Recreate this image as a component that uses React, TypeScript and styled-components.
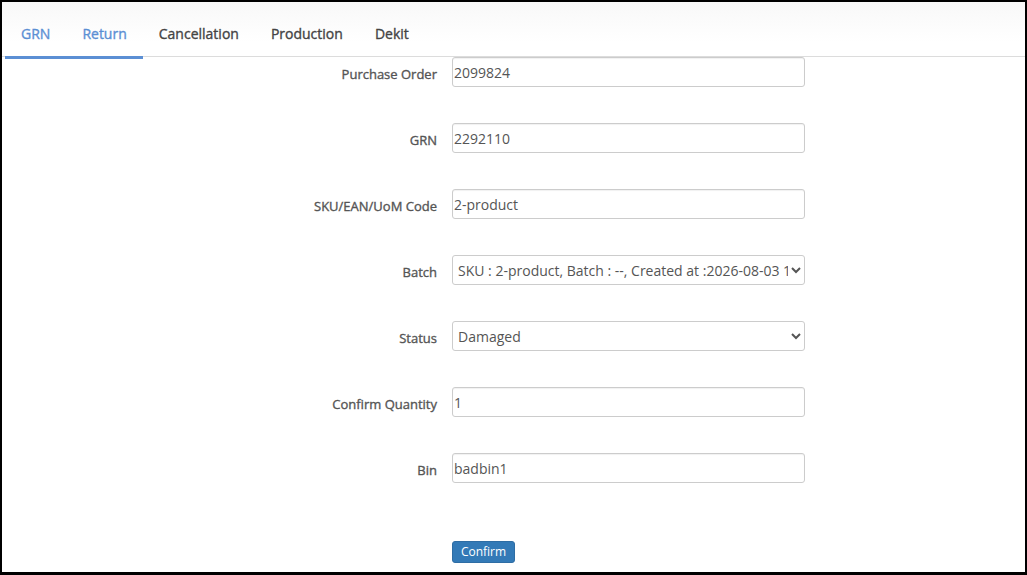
import React, { useState } from "react";
import styled, { createGlobalStyle } from "styled-components";

const GlobalStyle = createGlobalStyle`
  html, body {
    margin: 0;
    padding: 0;
    background: #fff;
    font-family: "Open Sans", "Liberation Sans", sans-serif;
  }
`;

const Frame = styled.div`
  box-sizing: border-box;
  width: 1027px;
  height: 575px;
  border-style: solid;
  border-color: #000;
  border-width: 2px 2px 3px 2px;
  background: #fff;
  overflow: hidden;
`;

const TabBar = styled.div`
  display: flex;
  height: 54px;
  padding-left: 3px;
  border-bottom: 1px solid #dcdcdc;
  background: linear-gradient(#f8f8f8, #fff 40px);
`;

/* semibold look: only regular/bold faces are available, so thicken regular */
const Tab = styled.div<{ $active?: boolean }>`
  display: flex;
  align-items: center;
  box-sizing: border-box;
  height: 57px;
  padding: 8px 16px 0;
  margin-bottom: -1px;
  font-size: 14px;
  font-weight: 400;
  -webkit-text-stroke: 0.35px currentColor;
  color: ${(p) => (p.$active ? "#5b8fd4" : "#444")};
  border-bottom: 3px solid ${(p) => (p.$active ? "#5b8fd4" : "transparent")};
  cursor: pointer;
`;

const Form = styled.div`
  display: flex;
  flex-direction: column;
`;

const Row = styled.div`
  display: flex;
  align-items: center;
  gap: 15px;
  margin-bottom: 36px;
`;

const Label = styled.label`
  width: 435px;
  text-align: right;
  font-size: 13px;
  font-weight: 400;
  -webkit-text-stroke: 0.35px currentColor;
  color: #555;
  padding-top: 3px;
`;

const TextInput = styled.input`
  box-sizing: border-box;
  width: 353px;
  height: 30px;
  padding: 0 1px;
  border: 1px solid #ccc;
  border-radius: 3px;
  box-shadow: inset 0 1px 1px rgba(0, 0, 0, 0.06);
  font-family: "Open Sans", "Liberation Sans", sans-serif;
  font-size: 14px;
  color: #555;
  outline: none;
`;

const Select = styled.select`
  box-sizing: border-box;
  width: 353px;
  height: 30px;
  padding: 0 0 0 1px;
  border: 1px solid #ccc;
  border-radius: 3px;
  background: #fff;
  font-family: "Open Sans", "Liberation Sans", sans-serif;
  font-size: 14px;
  color: #555;
  outline: none;
`;

const Actions = styled.div`
  padding: 20px 0 0 450px;
`;

const Button = styled.button`
  box-sizing: border-box;
  width: 63px;
  height: 22px;
  padding: 0;
  border: 1px solid #2e6da4;
  border-radius: 3px;
  background: #337ab7;
  color: #fff;
  font-family: "Open Sans", "Liberation Sans", sans-serif;
  font-size: 12px;
  cursor: pointer;
`;

const tabs = ["GRN", "Return", "Cancellation", "Production", "Dekit"];

const App = () => {
  const [active] = useState(["GRN", "Return"]);

  return (
    <Frame>
      <GlobalStyle />
      <TabBar>
        {tabs.map((t) => (
          <Tab key={t} $active={active.includes(t)}>
            {t}
          </Tab>
        ))}
      </TabBar>
      <Form>
        <Row>
          <Label>Purchase Order</Label>
          <TextInput defaultValue="2099824" />
        </Row>
        <Row>
          <Label>GRN</Label>
          <TextInput defaultValue="2292110" />
        </Row>
        <Row>
          <Label>SKU/EAN/UoM Code</Label>
          <TextInput defaultValue="2-product" />
        </Row>
        <Row>
          <Label>Batch</Label>
          <Select defaultValue="b1">
            <option value="b1">
              SKU : 2-product, Batch : --, Created at :2026-08-03 11:42:10
            </option>
          </Select>
        </Row>
        <Row>
          <Label>Status</Label>
          <Select defaultValue="damaged">
            <option value="good">Good</option>
            <option value="damaged">Damaged</option>
          </Select>
        </Row>
        <Row>
          <Label>Confirm Quantity</Label>
          <TextInput defaultValue="1" />
        </Row>
        <Row>
          <Label>Bin</Label>
          <TextInput defaultValue="badbin1" />
        </Row>
        <Actions>
          <Button>Confirm</Button>
        </Actions>
      </Form>
    </Frame>
  );
};

export default App;
